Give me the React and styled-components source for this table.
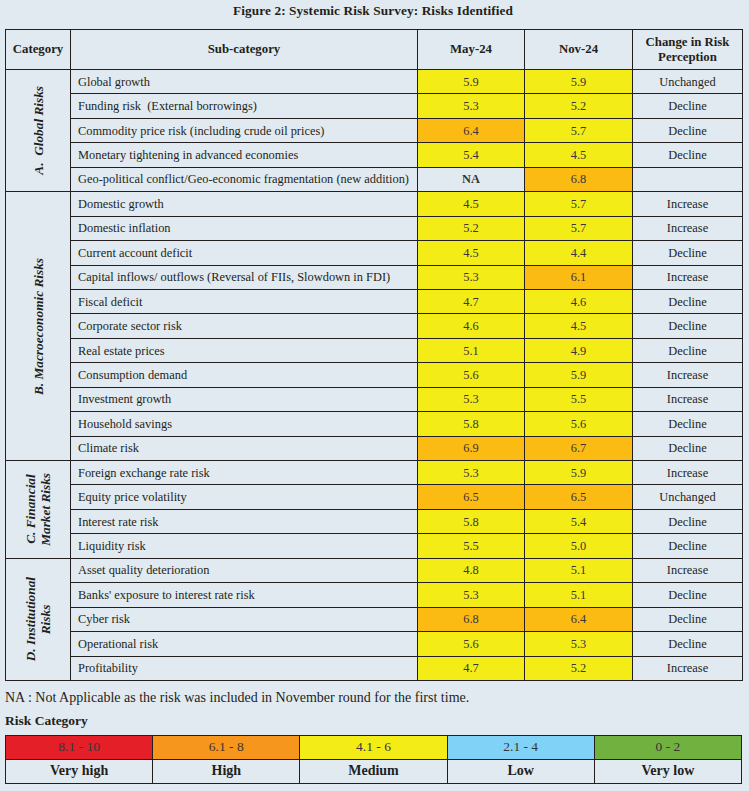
import React from "react";
import styled, { createGlobalStyle } from "styled-components";

const GlobalStyle = createGlobalStyle`
  html, body { margin: 0; padding: 0; background: #e1eaf0; }
  body { font-family: "Liberation Serif", "Times New Roman", serif; color: #231f20; }
`;

const Page = styled.div`
  width: 736px;
  padding: 3px 0 0 5px;
`;

const Title = styled.h1`
  margin: 0 0 10px;
  font-size: 13.3px;
  line-height: 16px;
  font-weight: 700;
  text-align: center;
  letter-spacing: 0.1px;
`;

const Table = styled.table`
  width: 737px;
  border-collapse: collapse;
  table-layout: fixed;
  font-size: 12.4px;
`;

const Th = styled.th`
  border: 1px solid #231f20;
  height: 39px;
  padding: 0 4px;
  font-weight: 700;
  font-size: 12.8px;
  line-height: 15px;
  text-align: center;
`;

const Row = styled.tr`
  height: 24.44px;
`;

const CatCell = styled.td`
  border: 1px solid #231f20;
  padding: 0;
  text-align: center;
  vertical-align: middle;
`;

const CatLabel = styled.div`
  writing-mode: vertical-rl;
  transform: rotate(180deg);
  font-weight: 700;
  font-style: italic;
  font-size: 13.3px;
  line-height: 15px;
  margin: 0 auto;
  white-space: pre;
  text-align: center;
`;

const SubCell = styled.td`
  border: 1px solid #231f20;
  padding: 0 0 0 7px;
  white-space: pre;
  line-height: 14px;
`;

const ValCell = styled.td`
  border: 1px solid #231f20;
  text-align: center;
  background: ${(p) => p.$bg};
  font-weight: ${(p) => (p.$na ? 700 : 400)};
  color: #3a3536;
  line-height: 14px;
`;

const ChangeCell = styled.td`
  border: 1px solid #231f20;
  text-align: center;
  line-height: 14px;
`;

const Note = styled.p`
  margin: 9px 0 0;
  font-size: 14px;
  line-height: 16px;
`;

const LegendTitle = styled.p`
  margin: 7px 0 0;
  font-size: 13.5px;
  font-weight: 700;
  line-height: 16px;
`;

const Legend = styled.div`
  margin-top: 6px;
  width: 736px;
  display: grid;
  grid-template-columns: repeat(5, 1fr);
  border-left: 1px solid #231f20;
  border-top: 1px solid #231f20;
`;

const Swatch = styled.div`
  height: 23px;
  background: ${(p) => p.$bg};
  border-right: 1px solid #231f20;
  border-bottom: 1px solid #231f20;
  display: flex;
  align-items: center;
  justify-content: center;
  font-size: 13.5px;
  color: #3a3536;
`;

const LegendLabel = styled.div`
  height: 23px;
  border-right: 1px solid #231f20;
  border-bottom: 1px solid #231f20;
  display: flex;
  align-items: center;
  justify-content: center;
  font-size: 14px;
  font-weight: 700;
`;

const YELLOW = "#f4ec17";
const ORANGE = "#fcbb13";

const bgFor = (v) => {
  if (v === "NA") return "transparent";
  return parseFloat(v) > 6 ? ORANGE : YELLOW;
};

const groups = [
  {
    cat: "A.  Global Risks",
    rows: [
      ["Global growth", "5.9", "5.9", "Unchanged"],
      ["Funding risk \u00a0(External borrowings)", "5.3", "5.2", "Decline"],
      ["Commodity price risk (including crude oil prices)", "6.4", "5.7", "Decline"],
      ["Monetary tightening in advanced economies", "5.4", "4.5", "Decline"],
      ["Geo-political conflict/Geo-economic fragmentation (new addition)", "NA", "6.8", ""],
    ],
  },
  {
    cat: "B. Macroeconomic Risks",
    rows: [
      ["Domestic growth", "4.5", "5.7", "Increase"],
      ["Domestic inflation", "5.2", "5.7", "Increase"],
      ["Current account deficit", "4.5", "4.4", "Decline"],
      ["Capital inflows/ outflows (Reversal of FIIs, Slowdown in FDI)", "5.3", "6.1", "Increase"],
      ["Fiscal deficit", "4.7", "4.6", "Decline"],
      ["Corporate sector risk", "4.6", "4.5", "Decline"],
      ["Real estate prices", "5.1", "4.9", "Decline"],
      ["Consumption demand", "5.6", "5.9", "Increase"],
      ["Investment growth", "5.3", "5.5", "Increase"],
      ["Household savings", "5.8", "5.6", "Decline"],
      ["Climate risk", "6.9", "6.7", "Decline"],
    ],
  },
  {
    cat: "C. Financial\nMarket Risks",
    rows: [
      ["Foreign exchange rate risk", "5.3", "5.9", "Increase"],
      ["Equity price volatility", "6.5", "6.5", "Unchanged"],
      ["Interest rate risk", "5.8", "5.4", "Decline"],
      ["Liquidity risk", "5.5", "5.0", "Decline"],
    ],
  },
  {
    cat: "D. Institutional\nRisks",
    rows: [
      ["Asset quality deterioration", "4.8", "5.1", "Increase"],
      ["Banks' exposure to interest rate risk", "5.3", "5.1", "Decline"],
      ["Cyber risk", "6.8", "6.4", "Decline"],
      ["Operational risk", "5.6", "5.3", "Decline"],
      ["Profitability", "4.7", "5.2", "Increase"],
    ],
  },
];

const legend = [
  ["8.1 - 10", "Very high", "#e51f28"],
  ["6.1 - 8", "High", "#f7961d"],
  ["4.1 - 6", "Medium", "#f4ec17"],
  ["2.1 - 4", "Low", "#80d3f6"],
  ["0 - 2", "Very low", "#70b13f"],
];

export default function App() {
  return (
    <>
      <GlobalStyle />
      <Page>
        <Title>Figure 2: Systemic Risk Survey: Risks Identified</Title>
        <Table>
          <colgroup>
            <col style={{ width: 65 }} />
            <col style={{ width: 347 }} />
            <col style={{ width: 107 }} />
            <col style={{ width: 108 }} />
            <col style={{ width: 110 }} />
          </colgroup>
          <thead>
            <tr>
              <Th>Category</Th>
              <Th>Sub-category</Th>
              <Th>May-24</Th>
              <Th>Nov-24</Th>
              <Th>Change in Risk Perception</Th>
            </tr>
          </thead>
          <tbody>
            {groups.map((g) =>
              g.rows.map((r, i) => (
                <Row key={g.cat + r[0]}>
                  {i === 0 && (
                    <CatCell rowSpan={g.rows.length}>
                      <CatLabel>{g.cat}</CatLabel>
                    </CatCell>
                  )}
                  <SubCell>{r[0]}</SubCell>
                  <ValCell $bg={bgFor(r[1])} $na={r[1] === "NA"}>{r[1]}</ValCell>
                  <ValCell $bg={bgFor(r[2])} $na={r[2] === "NA"}>{r[2]}</ValCell>
                  <ChangeCell>{r[3]}</ChangeCell>
                </Row>
              ))
            )}
          </tbody>
        </Table>
        <Note>NA : Not Applicable as the risk was included in November round for the first time.</Note>
        <LegendTitle>Risk Category</LegendTitle>
        <Legend>
          {legend.map(([range, , color]) => (
            <Swatch key={range} $bg={color}>{range}</Swatch>
          ))}
          {legend.map(([, label]) => (
            <LegendLabel key={label}>{label}</LegendLabel>
          ))}
        </Legend>
      </Page>
    </>
  );
}
